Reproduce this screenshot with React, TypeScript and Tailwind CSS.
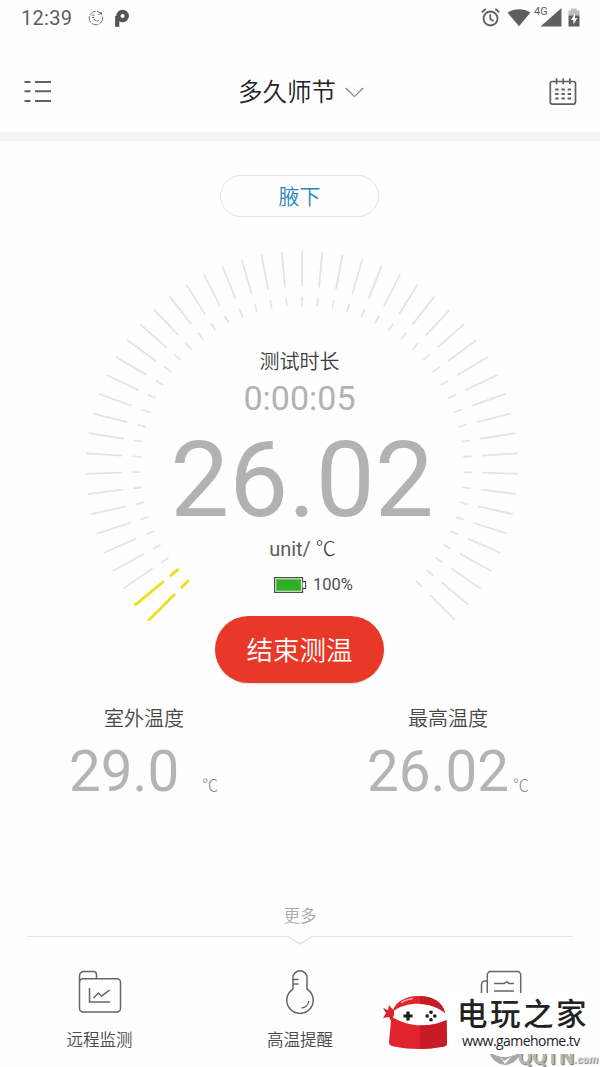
import React from 'react';

const TICK_STEP = 5.4;
const TICKS_PER_SIDE = 25;
const ACTIVE_TICKS = 2;

const TICKS = Array.from({ length: TICKS_PER_SIDE * 2 + 1 }, (_, i) => ({
  angle: (i - TICKS_PER_SIDE) * TICK_STEP,
  active: i < ACTIVE_TICKS,
}));

const StatusBar: React.FC = () => (
  <div className="flex h-9 items-center justify-between pl-[21px] pr-[20px] text-[#5f5f5f]">
    <div className="flex items-center">
      <span className="w-[52px] text-[20px] leading-9 tracking-[0.3px]">12:39</span>
      <svg className="ml-[15px]" width="16" height="16" viewBox="0 0 16 16" fill="none" stroke="#777">
        <circle cx="8" cy="8" r="6.8" strokeWidth="1" strokeDasharray="7 1.2" />
        <path d="M3.5 5.2h3M4 7.5h2.5M6 9c.8 2.3 3.500 2.600 5.200 1M10.500 4.600l2-.8" strokeWidth="1" />
        <circle cx="13" cy="3" r="1" fill="#666" stroke="none" />
      </svg>
      <svg className="ml-[10px]" width="16" height="19" viewBox="0 0 16 19" fill="none" stroke="#555">
        <circle cx="8.600" cy="7" r="4.200" strokeWidth="4.200" />
        <path d="M3.200 7v10.800" strokeWidth="4.200" />
      </svg>
    </div>
    <div className="flex items-center">
      <svg width="19" height="20" viewBox="0 0 19 20" fill="none" stroke="#5f5f5f" strokeWidth="1.800">
        <circle cx="9.500" cy="10.500" r="7" />
        <path d="M9.300 6.300v4.600l3.300 2M.8 4.300l4-3.400M18.200 4.300l-4-3.400" />
      </svg>
      <svg className="ml-[7px]" width="24" height="19" viewBox="0 0 24 19">
        <path d="M.5 3.600C7-1 17-1 23.500 3.600L12 17.300z" fill="#5f5f5f" />
      </svg>
      <span className="ml-[3px] h-[24px] w-[14px] text-[11px] leading-[11px]">4G</span>
      <svg className="-ml-[8px]" width="22" height="20" viewBox="0 0 22 20">
        <path d="M21.500 0v18.500H.5z" fill="#5f5f5f" />
      </svg>
      <svg className="ml-[6px]" width="12" height="20" viewBox="0 0 12 20">
        <path d="M.5 2.500h2.800V.5h5.400v2h2.800V8H.5z" fill="#bdbdbd" />
        <path d="M.5 7.500h11v11H.5z" fill="#5f5f5f" />
        <path d="M7 5.500 3 12h2.400v4.600L9.300 10H7z" fill="#fff" />
      </svg>
    </div>
  </div>
);

const Header: React.FC = () => (
  <header className="flex h-24 items-center justify-between pl-[24px] pr-[23px] pt-[16px]">
    <svg className="mb-[2px]" width="28" height="24" viewBox="0 0 28 24" stroke="#606060" strokeWidth="2">
      <path d="M.5 3h6M11 3h16M.5 12.300h6M11 12.300h16M.5 22h6M11 22h16" />
    </svg>
    <div className="flex items-center pl-px">
      <h1 className="pt-px text-[24.5px] font-[350] leading-8 text-[#222]">多久师节</h1>
      <svg className="ml-[9px] mt-px" width="19" height="11" viewBox="0 0 19 11" fill="none" stroke="#777" strokeWidth="1.100">
        <path d="M.8 1 9.500 9.600 18.200 1" />
      </svg>
    </div>
    <svg width="28" height="28" viewBox="0 0 28 28" fill="none" stroke="#606060" strokeWidth="1.700">
      <rect x="1.300" y="3.500" width="25.200" height="22.600" rx="2" />
      <path d="M7.500.3v6M14.200.3v6M20.900.3v6" />
      <path d="M6.200 11.500h15.800M6.200 16h15.800M6.200 20.500h15.800" strokeWidth="2.200" strokeDasharray="3.400 2.800" />
    </svg>
  </header>
);

const GaugeTicks: React.FC = () => (
  <svg className="col-start-1 row-start-1 ml-[4px] justify-self-center" width="440" height="380" viewBox="-220 -217 440 380">
    {TICKS.map(({ angle, active }) => (
      <g key={angle} transform={`rotate(${angle})`} stroke={active ? '#ecdf1c' : '#e4e4e4'}>
        <line y1={-216} y2={-180.5} strokeWidth={active ? 2.8 : 1.8} strokeLinecap={active ? 'round' : 'butt'} />
        <line y1={-170} y2={-161.5} strokeWidth={active ? 3 : 1.8} strokeLinecap={active ? 'round' : 'butt'} />
      </g>
    ))}
  </svg>
);

const Gauge: React.FC = () => (
  <section className="mt-[33px] grid">
    <GaugeTicks />
    <div className="col-start-1 row-start-1 flex flex-col items-center pt-[99px]">
      <div className="h-[26px] pr-px text-[20px] font-[350] leading-[26px] text-[#3c3c3c]">测试时长</div>
      <div className="h-[47px] pr-px text-[34px] leading-[46px] text-[#b2b2b2]">0:00:05</div>
      <div className="h-[114px] pl-[4px] text-[105px] leading-[118px] text-[#b2b2b2]">26.02</div>
      <div className="h-[26px] pl-[5px] text-[20px] leading-[26px] text-[#5c5c5c]">
        unit/ <span className="font-light text-[#333]">℃</span>
      </div>
      <div className="flex h-[46px] items-center pl-[27px] text-[16.5px] text-[#505050]">
        <svg className="mr-[6px]" width="33" height="16" viewBox="0 0 33 16">
          <rect x=".6" y=".6" width="28" height="14.800" fill="#d5ecd2" stroke="#444" strokeWidth="1.100" />
          <rect x="2.300" y="2.300" width="24.600" height="11.400" fill="#2faf22" />
          <path d="M28.600 4.600h3v6.800h-3" fill="#fff" stroke="#444" strokeWidth="1.100" />
        </svg>
        100%
      </div>
      <button className="mr-px mt-[8px] h-[67px] w-[169px] rounded-full bg-[#e73828] pt-[2px] text-[26.5px] font-[350] text-white shadow-[0_1px_2px_rgba(0,0,0,0.15)]">
        结束测温
      </button>
    </div>
  </section>
);

type ReadingProps = { label: string; value: string; labelClass: string; unitClass: string };

const Reading: React.FC<ReadingProps> = ({ label, value, labelClass, unitClass }) => (
  <div className="w-[298px] pl-[69px]">
    <div className={labelClass}>{label}</div>
    <div className="mt-[7px] flex items-baseline text-[56.5px] leading-[66px] text-[#b4b4b4]">
      {value}
      <span className={unitClass}>℃</span>
    </div>
  </div>
);

const MoreDivider: React.FC = () => (
  <div className="flex items-start px-[27px]">
    <div className="mt-px h-px flex-1 bg-[#e3e3e3]" />
    <svg width="26" height="10" viewBox="0 0 26 10" fill="none" stroke="#dedede" strokeWidth="1.200">
      <path d="M0 1.500h1L13 9 25 1.500h1" />
    </svg>
    <div className="mt-px h-px flex-1 bg-[#e3e3e3]" />
  </div>
);

const FolderIcon = () => (
  <svg width="44" height="44" viewBox="0 0 44 44" fill="none" stroke="#666" strokeWidth="1.500">
    <path d="M1.500 12V5.500a4 4 0 0 1 4-4h10q3 0 3 3.200V8.500" />
    <rect x="1.500" y="8.800" width="41" height="33.200" rx="3.500" />
    <path d="M11.500 18v14h20.500M15.500 28l4.800-5 3.200 3.200 8-6" />
  </svg>
);

const BulbIcon = () => (
  <svg width="30" height="46" viewBox="0 0 30 46" fill="none" stroke="#666" strokeWidth="1.500">
    <path d="M8 20V8.800a7 7 0 0 1 14 0V20A13.200 13.200 0 1 1 8 20z" stroke="none" />
    <path d="M8 20V8.800a7 7 0 0 1 14 0V20A13.200 13.200 0 1 1 8 20" />
    <path d="M8 10.500h5.500M8 15h5.500M23.800 32a8 8 0 0 1-7.300 7" />
  </svg>
);

const ReportIcon = () => (
  <svg width="42" height="44" viewBox="0 0 42 44" fill="none" stroke="#666" strokeWidth="1.500">
    <path d="M7.300 42V5a3.500 3.500 0 0 1 3.500-3.500h26.400A3.500 3.500 0 0 1 40.700 5v37zM7.300 11H5a3.500 3.500 0 0 0-3.500 3.500V42h6" />
    <path d="M14 13.500h10l3-1.800 2 1.800h5M14 21h20" />
  </svg>
);

const NinjaLogo: React.FC = () => (
  <svg width="68" height="56" viewBox="0 0 68 56">
    <path d="M12 16 7 10 6 15 1 13l3 5-3 5 6-1 2 4 3-6z" fill="#d9242b" />
    <path d="M10 17C14 6 24 1 36 1c14 0 25 6 27 17C50 7 26 5 10 17z" fill="#e1232c" />
    <path d="M38 1c13 .5 23 6 25 17-7-6-15-8.500-25-9z" fill="#c71c26" />
    <path d="M19 7.500Q25 4 31 3.500" stroke="#f4a6a6" strokeWidth="1.500" fill="none" />
    <path d="M9.500 21.500C24 32 48 33 64.500 25L65 48q0 3-3 3.500-26 5-50 0-5.500-1-5-5z" fill="#e1232c" />
    <path d="M38 30.500q15 .5 26.500-5.500L65 48q0 3-3 3.500-12 2.300-24 2.500z" fill="#c71c26" />
    <path d="M26 16.500v9M21.500 21h9" stroke="#1c1c1c" strokeWidth="3.200" />
    <g fill="#1c1c1c">
      <circle cx="49" cy="17.200" r="1.800" />
      <circle cx="49" cy="24.800" r="1.800" />
      <circle cx="45.200" cy="21" r="1.800" />
      <circle cx="52.800" cy="21" r="1.800" />
    </g>
  </svg>
);

const Watermark: React.FC = () => (
  <>
    {/* lower mark, mostly hidden under the site logo */}
    <div className="absolute bottom-0 right-[2px] flex h-[20px] items-end">
      <svg className="-mr-[4px]" width="34" height="20" viewBox="0 0 34 20">
        <path d="M1 5q16 10 32 0-4 12-16 13Q5 17 1 5z" fill="#a8a8a8" />
        <path d="m11 8 5 6 8-5-7 8z" fill="#fff" />
      </svg>
      <span className="text-[21px] font-bold leading-[20px] text-[#b5b5b5] [text-shadow:1px_1px_1px_#666]">QQTN</span>
      <span className="text-[11px] font-bold italic leading-[14px] text-[#ddd] [text-shadow:1px_1px_1px_#777]">.com</span>
    </div>
    <div className="absolute bottom-[13px] right-[15px] flex h-[61px] w-[205px] bg-white">
      <div className="ml-[2px] mt-[2px]">
        <NinjaLogo />
      </div>
      <div className="ml-[7px] mt-[4px] flex flex-col whitespace-nowrap text-[#222]">
        <span className="text-[30.5px] font-medium leading-[35px] tracking-[2.5px]">电玩之家</span>
        <span className="ml-[5px] font-['Open_Sans',sans-serif] text-[14px] leading-[17px] tracking-[-0.55px]">www.gamehome.tv</span>
      </div>
    </div>
  </>
);

const App: React.FC = () => (
  <div className="relative flex h-[1067px] w-[600px] flex-col overflow-hidden bg-[#fefefe] font-[Roboto,'Noto_Sans_CJK_SC',sans-serif]">
    <StatusBar />
    <Header />
    <div className="h-[9px] shrink-0 bg-[#f5f5f5]" />

    <button className="mr-px mt-[34px] h-[42px] w-[159px] shrink-0 self-center rounded-full border border-[#e2e2e2] pt-[3px] text-[21px] font-[350] text-[#2487bd]">
      腋下
    </button>

    <Gauge />

    <div className="mt-[22px] flex">
      <Reading
        label="室外温度"
        value="29.0"
        labelClass="pl-[35px] pt-px text-[20px] font-[350] leading-[26px] text-[#484848]"
        unitClass="ml-[23px] text-[16px] font-light leading-none text-[#888]"
      />
      <Reading
        label="最高温度"
        value="26.02"
        labelClass="pl-[41px] pt-px text-[20px] font-[350] leading-[26px] text-[#484848]"
        unitClass="ml-[4px] text-[16px] font-light leading-none text-[#888]"
      />
    </div>

    <div className="mt-[102px] text-center text-[16.5px] font-[350] leading-[20px] text-[#aaa]">更多</div>
    <div className="mt-[8px]">
      <MoreDivider />
    </div>

    <nav className="mt-[24px] flex justify-between px-[66px] text-[16.5px] font-[350] text-[#484848]">
      <div className="flex w-[67px] flex-col items-center">
        <div className="flex h-[46px] items-center">
          <FolderIcon />
        </div>
        <span className="mt-[14px] whitespace-nowrap leading-[24px]">远程监测</span>
      </div>
      <div className="flex w-[67px] flex-col items-center">
        <div className="flex h-[46px] items-center">
          <BulbIcon />
        </div>
        <span className="mt-[14px] whitespace-nowrap leading-[24px]">高温提醒</span>
      </div>
      <div className="flex w-[67px] flex-col items-center">
        <div className="flex h-[46px] items-center">
          <ReportIcon />
        </div>
      </div>
    </nav>

    <Watermark />
  </div>
);

export default App;
